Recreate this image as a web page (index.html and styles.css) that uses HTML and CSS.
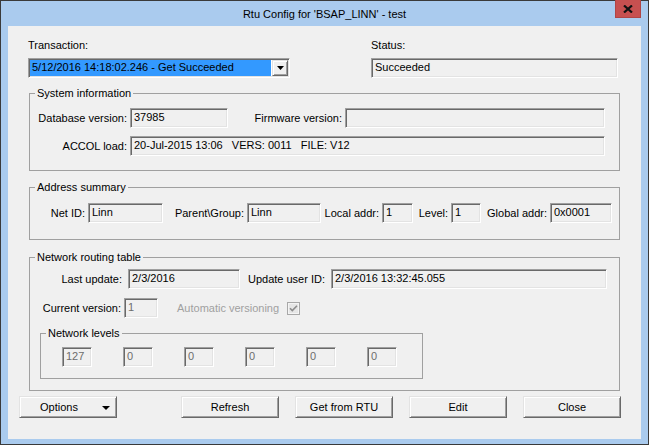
FILE: index.html
```html
<!DOCTYPE html>
<html>
<head>
<meta charset="utf-8">
<link rel="stylesheet" href="styles.css">
</head>
<body>
<div class="window">
  <div class="titlebar">
    <span></span>
    <div class="title">Rtu Config for 'BSAP_LINN' - test</div>
    <div class="close"><svg width="10" height="8" viewBox="0 0 10 8"><path d="M1 0.5 L9 7.5 M9 0.5 L1 7.5" stroke="#111" stroke-width="2.2" fill="none"/></svg></div>
  </div>
  <div class="panel">
    <div class="top-row">
      <div class="col col-trans">
        <div class="lbl">Transaction:</div>
        <div class="combo">
          <div class="combo-sel">5/12/2016 14:18:02.246 - Get Succeeded</div>
          <div class="combo-btn"><svg width="7" height="4" viewBox="0 0 7 4"><path d="M0 0 H7 L3.5 4 Z" fill="#000"/></svg></div>
        </div>
      </div>
      <div class="col col-status">
        <div class="lbl">Status:</div>
        <div class="field w247">Succeeded</div>
      </div>
    </div>

    <fieldset class="group g-sys">
      <legend>System information</legend>
      <div class="row">
        <span class="rl w97 mr3">Database version:</span>
        <div class="field w98">37985</div>
        <span class="rl w114 mr3">Firmware version:</span>
        <div class="field w260"></div>
      </div>
      <div class="row mt8">
        <span class="rl w97 mr3">ACCOL load:</span>
        <div class="field w475">20-Jul-2015 13:06&nbsp;&nbsp;&nbsp;VERS: 0011&nbsp;&nbsp;&nbsp;FILE: V12</div>
      </div>
    </fieldset>

    <fieldset class="group g-addr">
      <legend>Address summary</legend>
      <div class="row">
        <span class="rl w55 mr3">Net ID:</span>
        <div class="field w75">Linn</div>
        <span class="rl w81 mr3">Parent\Group:</span>
        <div class="field w74">Linn</div>
        <span class="rl w58 mr3">Local addr:</span>
        <div class="field w31">1</div>
        <span class="rl w35 mr3">Level:</span>
        <div class="field w30">1</div>
        <span class="rl w66 mr3">Global addr:</span>
        <div class="field w62">0x0001</div>
      </div>
    </fieldset>

    <fieldset class="group g-route">
      <legend>Network routing table</legend>
      <div class="row">
        <span class="rl w92 mr6">Last update:</span>
        <div class="field w112">2/3/2016</div>
        <span class="rl w85 mr6">Update user ID:</span>
        <div class="field w276">2/3/2016 13:32:45.055</div>
      </div>
      <div class="row mt9">
        <span class="rl w91 mr3">Current version:</span>
        <div class="field w34 dis">1</div>
        <span class="auto-lbl">Automatic versioning</span>
        <svg class="chk" width="13" height="13" viewBox="0 0 13 13"><rect x="0.5" y="0.5" width="12" height="12" fill="#e6e6e6" stroke="#a8a8a8"/><rect x="1.5" y="1.5" width="10" height="10" fill="none" stroke="#f4f4f4"/><path d="M3 6.2 L5.3 8.6 L10 3.8" stroke="#8d8d8d" stroke-width="1.6" fill="none"/></svg>
      </div>
      <fieldset class="group g-levels">
        <legend>Network levels</legend>
        <div class="row levels">
          <div class="field w30 dis">127</div>
          <div class="field w30 dis">0</div>
          <div class="field w30 dis">0</div>
          <div class="field w30 dis">0</div>
          <div class="field w30 dis">0</div>
          <div class="field w30 dis">0</div>
        </div>
      </fieldset>
    </fieldset>

    <div class="buttons">
      <div class="btn btn-options"><span>Options</span><svg width="8" height="4" viewBox="0 0 8 4"><path d="M0 0 H8 L4 4 Z" fill="#000"/></svg></div>
      <div class="btn btn-first">Refresh</div>
      <div class="btn">Get from RTU</div>
      <div class="btn">Edit</div>
      <div class="btn">Close</div>
    </div>
  </div>
</div>
</body>
</html>
```

FILE: styles.css
```css
* { box-sizing: border-box; }

body {
  margin: 0;
  font-family: "Liberation Sans", Arial, sans-serif;
  font-size: 11px;
  line-height: 13px;
  color: #000;
  background: #fff;
}

.window {
  width: 649px;
  height: 445px;
  border: 1px solid #3a3a3a;
  background: #aacbee;
  display: flex;
  flex-direction: column;
}

.titlebar {
  height: 25px;
  flex: none;
  display: grid;
  grid-template-columns: 1fr auto 1fr;
  align-items: start;
}

.title {
  padding-top: 7px;
  white-space: nowrap;
  color: #000;
}

.close {
  justify-self: end;
  margin-right: 7px;
  margin-top: -1px;
  width: 26px;
  height: 18px;
  background: #c75050;
  border: 1px solid #b04545;
  border-top: none;
  display: flex;
  align-items: center;
  justify-content: center;
}

.panel {
  margin: 0 7px;
  height: 413px;
  background: #f0f0f0;
  padding-top: 13px;
}

.top-row {
  display: flex;
}

.col-trans {
  margin-left: 20px;
  width: 262px;
}

.col-status {
  margin-left: 81px;
  width: 247px;
}

.lbl {
  height: 13px;
  margin-bottom: 6px;
  white-space: nowrap;
}

.field {
  height: 20px;
  flex: none;
  border: 1px solid;
  border-color: #a0a0a0 #ffffff #ffffff #a0a0a0;
  box-shadow: inset 1px 1px 0 #696969, inset -1px -1px 0 #e3e3e3;
  padding: 2px 3px 0 3px;
  white-space: nowrap;
  overflow: hidden;
  background: #f0f0f0;
}

.dis { color: #6d6d6d; }

.combo {
  width: 262px;
  height: 20px;
  display: flex;
  border: 1px solid;
  border-color: #a0a0a0 #ffffff #ffffff #a0a0a0;
  box-shadow: inset 1px 1px 0 #696969, inset -1px -1px 0 #e3e3e3;
  padding: 1px;
  background: #ffffff;
}

.combo-sel {
  flex: 1;
  background: #3399ff;
  padding: 1px 0 0 2px;
  white-space: nowrap;
  overflow: hidden;
  color: #000;
}

.combo-btn {
  width: 16px;
  margin-left: 1px;
  border: 1px solid;
  border-color: #e3e3e3 #696969 #696969 #e3e3e3;
  box-shadow: inset 1px 1px 0 #ffffff, inset -1px -1px 0 #a0a0a0;
  background: #f0f0f0;
  display: flex;
  align-items: center;
  justify-content: center;
}

.group {
  margin: 0 0 0 21px;
  width: 591px;
  min-width: 0;
  border: 1px solid #a0a0a0;
  padding: 0;
}

.group legend {
  margin-left: 5px;
  padding: 0 2px;
  line-height: 13px;
  white-space: nowrap;
}

.g-sys { margin-top: 9px; padding: 8px 0 14px 0; }
.g-addr { margin-top: 10px; padding: 9px 0 16px 0; }
.g-route { margin-top: 11px; padding: 5px 0 11px 0; }
.g-levels { margin: 9px 0 0 10px; width: 383px; padding: 7px 0 11px 0; }

.row {
  display: flex;
  align-items: center;
  height: 20px;
}

.mt8 { margin-top: 8px; }
.mt9 { margin-top: 9px; }

.rl {
  flex: none;
  text-align: right;
  white-space: nowrap;
  padding-top: 1px;
}

.mr3 { margin-right: 3px; }
.mr6 { margin-right: 6px; }

.w30 { width: 30px; }
.w31 { width: 31px; }
.w34 { width: 34px; }
.w35 { width: 35px; }
.w55 { width: 55px; }
.w58 { width: 58px; }
.w62 { width: 62px; }
.w66 { width: 66px; }
.w74 { width: 74px; }
.w75 { width: 75px; }
.w81 { width: 81px; }
.w85 { width: 85px; }
.w91 { width: 91px; }
.w92 { width: 92px; }
.w97 { width: 97px; }
.w98 { width: 98px; }
.w112 { width: 112px; }
.w114 { width: 114px; }
.w247 { width: 247px; }
.w260 { width: 260px; }
.w276 { width: 276px; }
.w475 { width: 475px; }

.auto-lbl {
  margin-left: 19px;
  width: 110px;
  flex: none;
  color: #a0a0a0;
  white-space: nowrap;
  padding-top: 1px;
}

.chk { flex: none; }

.levels {
  margin-left: 21px;
  gap: 31px;
}

.buttons {
  display: flex;
  margin: 5px 0 0 11px;
  height: 22px;
  gap: 16px;
}

.btn {
  width: 98px;
  height: 22px;
  flex: none;
  border: 1px solid;
  border-color: #e3e3e3 #696969 #696969 #e3e3e3;
  box-shadow: inset 1px 1px 0 #ffffff, inset -1px -1px 0 #a0a0a0;
  background: #f0f0f0;
  display: flex;
  align-items: center;
  justify-content: center;
  white-space: nowrap;
}

.btn-options {
  justify-content: space-between;
  padding: 1px 6px 0 20px;
}

.btn-first { margin-left: 48px; }
```
